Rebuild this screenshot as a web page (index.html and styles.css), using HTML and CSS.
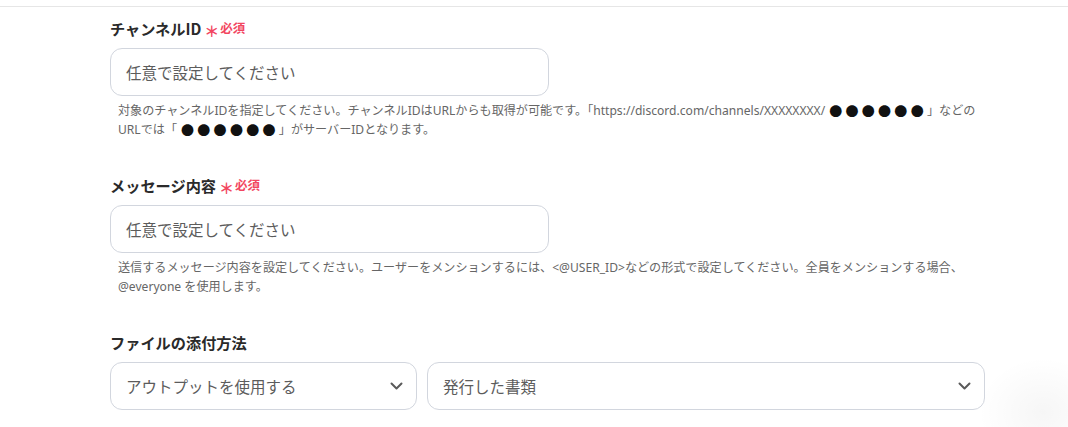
FILE: index.html
```html
<!DOCTYPE html>
<html lang="ja">
<head>
<meta charset="utf-8">
<title>Discord 設定</title>
<link rel="stylesheet" href="styles.css">
</head>
<body>
<div class="page">
  <div class="divider"></div>
  <form class="form">
    <div class="field">
      <div class="label">チャンネルID<span class="req"><span class="ast">＊</span>必須</span></div>
      <div class="input">任意で設定してください</div>
      <p class="help">対象のチャンネルIDを指定してください。チャンネルIDはURLからも取得が可能です。「https://discord.com/channels/XXXXXXXX/<span class="dots">●●●●●●</span>」などの URLでは「<span class="dots">●●●●●●</span>」がサーバーIDとなります。</p>
    </div>
    <div class="field">
      <div class="label">メッセージ内容<span class="req"><span class="ast">＊</span>必須</span></div>
      <div class="input">任意で設定してください</div>
      <p class="help">送信するメッセージ内容を設定してください。ユーザーをメンションするには、&lt;@USER_ID&gt;などの形式で設定してください。全員をメンションする場合、 @everyone を使用します。</p>
    </div>
    <div class="field">
      <div class="label">ファイルの添付方法</div>
      <div class="selects">
        <div class="select first">
          <span>アウトプットを使用する</span>
          <svg class="chev" width="13" height="8" viewBox="0 0 13 8"><path d="M1.5 1.5 L6.5 6.5 L11.5 1.5" fill="none" stroke="#5a5a5a" stroke-width="2" stroke-linecap="round" stroke-linejoin="round"/></svg>
        </div>
        <div class="select second">
          <span>発行した書類</span>
          <svg class="chev" width="13" height="8" viewBox="0 0 13 8"><path d="M1.5 1.5 L6.5 6.5 L11.5 1.5" fill="none" stroke="#5a5a5a" stroke-width="2" stroke-linecap="round" stroke-linejoin="round"/></svg>
        </div>
      </div>
    </div>
  </form>
  <div class="fab-shadow"></div>
</div>
</body>
</html>
```

FILE: styles.css
```css
html, body {
  margin: 0;
  padding: 0;
  background: #ffffff;
}
body {
  font-family: "Noto Sans", "Noto Sans CJK JP", sans-serif;
  color: #333333;
  width: 1068px;
  height: 427px;
  overflow: hidden;
}
.page {
  position: relative;
  width: 1068px;
  height: 427px;
  padding-top: 6px;
  box-sizing: border-box;
  overflow: hidden;
}
.divider {
  border-top: 1px solid #e6e6e6;
}
.form {
  margin: 0 0 0 110px;
  width: 875px;
  padding-top: 10px;
}
.field {
  margin-bottom: 35px;
}
.label {
  font-family: "Noto Sans CJK JP", sans-serif;
  font-size: 15.2px;
  font-weight: 700;
  line-height: 22px;
  height: 22px;
  color: #2a2a2a;
  margin-bottom: 9px;
  display: flex;
  align-items: center;
}
.req {
  display: inline-flex;
  align-items: center;
  height: 22px;
  color: #f2465f;
  font-size: 12.5px;
  font-weight: 700;
  margin-left: 3px;
}
.ast {
  font-family: "Noto Sans CJK JP", sans-serif;
  font-size: 15px;
  font-weight: 700;
  line-height: 1;
  margin-right: 1px;
  position: relative;
  top: 2px;
}
.input {
  box-sizing: border-box;
  width: 439px;
  height: 48px;
  border: 1px solid #d2d6de;
  border-radius: 12px;
  padding: 0 15px;
  display: flex;
  align-items: center;
  font-family: "Noto Sans CJK JP", sans-serif;
  font-size: 15.5px;
  color: #5c5c5c;
}
.help {
  margin: 5px 0 0 0;
  padding-left: 8px;
  font-family: "Noto Sans", "Noto Sans CJK JP", sans-serif;
  font-size: 12.1px;
  line-height: 19px;
  color: #666666;
}
.dots {
  display: inline-block;
  height: 19px;
  vertical-align: top;
  font-family: "Noto Sans CJK JP", sans-serif;
  font-size: 13px;
  line-height: 19px;
  letter-spacing: 3.3px;
  padding-left: 4px;
  color: #111111;
}
.selects {
  display: flex;
  gap: 10px;
}
.select {
  box-sizing: border-box;
  height: 48px;
  border: 1px solid #d2d6de;
  border-radius: 12px;
  padding: 0 13px 0 15px;
  display: flex;
  align-items: center;
  justify-content: space-between;
  font-family: "Noto Sans CJK JP", sans-serif;
  font-size: 15.5px;
  color: #5c5c5c;
}
.select.first {
  width: 307px;
}
.select.second {
  flex: 1;
}
.chev {
  display: block;
}
.fab-shadow {
  position: absolute;
  right: -40px;
  bottom: -40px;
  width: 130px;
  height: 110px;
  border-radius: 50%;
  background: radial-gradient(closest-side, rgba(0,0,0,0.035), rgba(0,0,0,0));
}
```
